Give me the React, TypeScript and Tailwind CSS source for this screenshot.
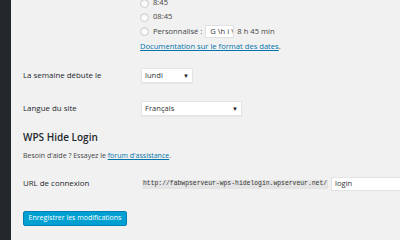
import React from 'react';

const font = { fontFamily: '"Open Sans", "Liberation Sans", sans-serif' };

const Radio: React.FC<{ children: React.ReactNode; className?: string }> = ({ children, className }) => (
    <div className={`flex items-center whitespace-nowrap ${className ?? 'h-[14px]'}`}>
        <span className="mr-[4px] h-[9px] w-[9px] shrink-0 rounded-full border border-[#c9cdd1] bg-[#fbfbfb] shadow-[inset_0_1px_1px_rgba(0,0,0,0.08)]" />
        {children}
    </div>
);

const Arrow = () => <span className="text-[6px] leading-none text-[#222]">▼</span>;

const App: React.FC = () => {
    return (
        <div className="flex h-[240px] w-[400px] overflow-hidden bg-[#f1f1f1] text-[#23282d]" style={font}>
            {/* admin sidebar edge */}
            <div className="w-[11px] shrink-0 bg-[#23282d]" />

            <div className="min-w-0 flex-1 pl-[12px]">
                {/* time format choices */}
                <div className="-mt-[4px] flex">
                    <div className="w-[117px] shrink-0" />
                    <div className="text-[7.6px] text-[#444]">
                        <Radio>8:45</Radio>
                        <Radio>08:45</Radio>
                        <Radio className="h-[15px]">
                            Personnalisé :
                            <span className="ml-[3px] flex h-[13px] w-[29px] shrink-0 items-center overflow-hidden whitespace-nowrap border border-[#e2e2e2] bg-white pl-[4px] text-[#333]">
                                G \h i \
                            </span>
                            <span className="ml-[3px]">8 h 45 min</span>
                        </Radio>
                        <div className="flex h-[16px] items-center">
                            <span className="text-[#0073aa] underline">Documentation sur le format des dates</span>.
                        </div>
                    </div>
                </div>

                {/* week start */}
                <div className="mt-[13px] flex h-[15px] items-center">
                    <div className="w-[118px] shrink-0 text-[7.9px]">La semaine débute le</div>
                    <div className="flex h-[15px] w-[52px] items-center justify-between border border-[#e4e4e4] bg-white pl-[3px] pr-[3px] text-[7.6px] text-[#333] shadow-[0_1px_1px_rgba(0,0,0,0.04)]">
                        lundi
                        <Arrow />
                    </div>
                </div>

                {/* site language */}
                <div className="mt-[18px] flex h-[15px] items-center">
                    <div className="w-[118px] shrink-0 text-[7.9px]">Langue du site</div>
                    <div className="flex h-[15px] w-[101px] items-center justify-between border border-[#e4e4e4] bg-white pl-[3px] pr-[3px] text-[7.6px] text-[#333] shadow-[0_1px_1px_rgba(0,0,0,0.04)]">
                        Français
                        <Arrow />
                    </div>
                </div>

                <h2 className="mt-[14px] h-[14px] text-[10px] font-semibold leading-[14px] text-[#23282d]">WPS Hide Login</h2>
                <p className="mt-[7px] h-[10px] text-[7px] leading-[10px] text-[#444]">
                    Besoin d'aide ? Essayez le <span className="text-[#0073aa] underline">forum d'assistance</span>.
                </p>

                {/* login url */}
                <div className="mt-[16px] flex h-[14px] items-center">
                    <div className="w-[119px] shrink-0 text-[7.9px]">URL de connexion</div>
                    <code
                        className="flex h-[9px] shrink-0 items-center bg-[#e4e4e4] px-[1px] text-[6.4px] text-[#333]"
                        style={{ fontFamily: '"Liberation Mono", monospace' }}
                    >
                        http://fabwpserveur-wps-hidelogin.wpserveur.net/
                    </code>
                    <div className="ml-[3px] flex h-[14px] w-[90px] shrink-0 items-center border border-[#e2e2e2] bg-white pl-[3px] text-[7.6px] text-[#333]">
                        login
                    </div>
                </div>

                <button className="mt-[20px] flex h-[15px] w-[104px] items-center justify-center rounded-[2px] border border-[#0080b5] bg-[#00a0d2] text-[7px] text-white">
                    Enregistrer les modifications
                </button>
            </div>
        </div>
    );
};

export default App;
